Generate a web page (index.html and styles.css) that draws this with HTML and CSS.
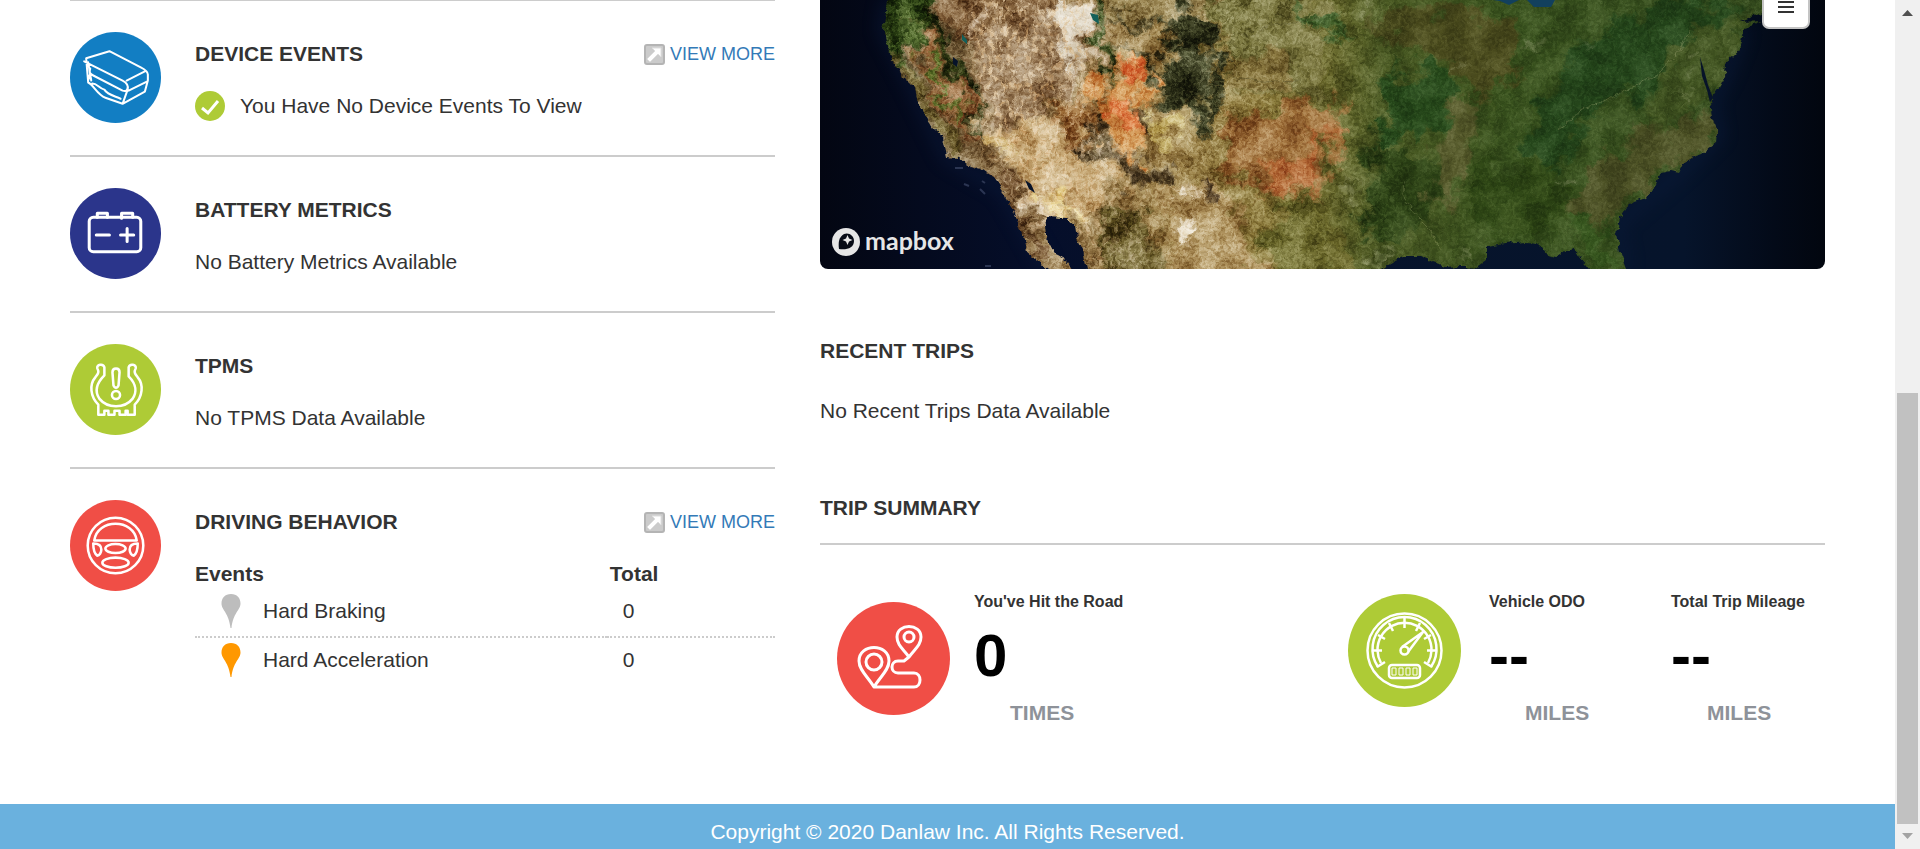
FILE: index.html
```html
<!DOCTYPE html>
<html lang="en">
<head>
<meta charset="utf-8">
<title>Vehicle Dashboard</title>
<link rel="stylesheet" href="styles.css">
</head>
<body>
<svg class="defs" aria-hidden="true">
  <symbol id="arrow-box" viewBox="0 0 21 21">
    <rect x="1" y="1" width="19" height="19" rx="2" fill="#cbcbcb" stroke="#b4b4b4" stroke-width="2"/>
    <path d="M8 4h9v9l-3-3-8 8-3-3 8-8z" fill="#fff" stroke="#dedede"/>
  </symbol>
  <symbol id="pin" viewBox="0 0 20 34">
    <path d="M10 0C4 0 .5 4 .5 9.500C.5 16 8 19 9.500 34h1C12 19 19.500 16 19.500 9.500 19.500 4 16 0 10 0z" fill="currentColor"/>
  </symbol>
</svg>
<div class="page">
  <div class="content">
    <main class="columns">
      <div class="panels">
        <section class="panel">
          <svg class="badge" viewBox="0 0 90 90" fill="none" stroke="#fff" stroke-width="2" stroke-linejoin="round" stroke-linecap="round">
            <circle cx="45" cy="45" r="45" fill="#127ec3" stroke="none"/>
            <path d="M16 26 39 19 70 35c4 2 7 4 7 7v6l-3 11-22 12-17-6c-8-3-12-13-17-15zM14 29l38 19c4 2 6 5 5 9l-5 14M20 36c-1 4-1 5 3 7l29 15c3 1 5 0 5-3M20 41l-2 7M56 48l18-9M58 58l18-9M18 30l3 18M22 51c5 0 6 4 12 6 3 5 9 6 16 9"/>
          </svg>
          <div class="panel-body">
            <div class="panel-head"><h2>DEVICE EVENTS</h2>
              <a class="more" href="#device-events"><svg viewBox="0 0 21 21"><use href="#arrow-box"/></svg>VIEW MORE</a></div>
            <p class="ok"><svg viewBox="0 0 30 30"><circle cx="15" cy="15" r="15" fill="#aecb36"/><path d="m7 17 6 5 10-12" fill="none" stroke="#fff" stroke-width="3"/></svg>You Have No Device Events To View</p>
          </div>
        </section>
        <section class="panel">
          <svg class="badge" viewBox="0 0 90 90" fill="none" stroke="#fff" stroke-width="3" stroke-linejoin="round">
            <circle cx="45" cy="45" r="45" fill="#2b358b" stroke="none"/>
            <rect x="19" y="29" width="51" height="34" rx="4"/>
            <path d="M27 29v-4h10v4M51 30v-5h11v4M26 46.500h13M50 46.500h13M56.500 40v13" stroke-linecap="round"/>
          </svg>
          <div class="panel-body">
            <div class="panel-head"><h2>BATTERY METRICS</h2></div>
            <p>No Battery Metrics Available</p>
          </div>
        </section>
        <section class="panel">
          <svg class="badge" viewBox="0 0 90 90" fill="none" stroke="#fff" stroke-width="2.500" stroke-linejoin="round">
            <circle cx="45" cy="45" r="45" fill="#aecb36" stroke="none"/>
            <path d="M28 70V60C20 52 19 40 25 33c3-4 4-5 2-9-1-4 6-5 7-1v8C25 40 25 48 29 54c8 10 25 10 33 0 4-6 4-14-4-22v-9c1-4 8-3 7 1-2 4-1 5 2 9 6 7 5 19-3 27v10h-7v-4h-2v4h-6v-4h-5v4h-6v-4h-4v4z"/>
            <path d="M42 28c0-5 7-5 7 0l-1 13c-1 3-4 3-5 0z"/><circle cx="45.500" cy="50.500" r="4"/>
          </svg>
          <div class="panel-body">
            <div class="panel-head"><h2>TPMS</h2></div>
            <p>No TPMS Data Available</p>
          </div>
        </section>
        <section class="panel">
          <svg class="badge" viewBox="0 0 90 90" fill="none" stroke="#fff" stroke-width="2.500" stroke-linejoin="round">
            <circle cx="45" cy="45" r="45" fill="#f04e46" stroke="none"/>
            <circle cx="45" cy="45" r="27.500"/>
            <path d="M24 40c3-22 39-22 42 0zM23 43c7 0 8 3 8 6s-2 6-4 6c-3-2-4-7-4-12zM67 43c-7 0-8 3-8 6s2 6 4 6c3-2 4-7 4-12z"/>
            <ellipse cx="45" cy="48" rx="10" ry="4.500"/><ellipse cx="45" cy="62" rx="13" ry="5"/>
          </svg>
          <div class="panel-body">
            <div class="panel-head"><h2>DRIVING BEHAVIOR</h2>
              <a class="more" href="#driving-behavior"><svg viewBox="0 0 21 21"><use href="#arrow-box"/></svg>VIEW MORE</a></div>
            <table class="events">
              <thead><tr><th class="event-name">Events</th><th>Total</th></tr></thead>
              <tbody>
                <tr><td><span class="event"><svg class="pin braking" viewBox="0 0 20 34"><use href="#pin"/></svg>Hard Braking</span></td><td class="count">0</td></tr>
                <tr><td><span class="event"><svg class="pin accel" viewBox="0 0 20 34"><use href="#pin"/></svg>Hard Acceleration</span></td><td class="count">0</td></tr>
              </tbody>
            </table>
          </div>
        </section>
      </div>
      <div class="trips">
        <div class="map">
          <svg class="terrain" viewBox="0 0 1005 269" preserveAspectRatio="xMidYMid slice" role="img" aria-label="Satellite map" color-interpolation-filters="sRGB">
            <defs>
              <linearGradient id="sea" x1="0" x2="1" y1="0" y2="0">
                <stop offset="0" stop-color="#030612"/><stop offset=".1" stop-color="#040a1e"/><stop offset=".22" stop-color="#050e2a"/><stop offset=".5" stop-color="#07142c"/><stop offset=".86" stop-color="#06142b"/><stop offset=".95" stop-color="#030a18"/><stop offset="1" stop-color="#02060f"/>
              </linearGradient>
              <linearGradient id="ground" x1="0" x2="1" y1="0" y2="0">
                <stop offset=".06" stop-color="#5d4d2b"/><stop offset=".18" stop-color="#96794f"/><stop offset=".35" stop-color="#a1864d"/><stop offset=".44" stop-color="#8b7939"/><stop offset=".5" stop-color="#6c6a2c"/><stop offset=".56" stop-color="#4b5a23"/><stop offset=".68" stop-color="#38511d"/><stop offset="1" stop-color="#33491d"/>
              </linearGradient>
              <clipPath id="land">
                <path d="M70-15 68 0 63 30 72 60 82 76 93 87 97 101 105 115 113 128 123 137 127 157 138 158 150 166 163 170 174 178 183 190 187 201 193 210 197 223 203 237 206 251 213 257 228 269 235 290 256 290 250 269 247 262 237 256 232 247 228 243 225 217 247 218 255 225 257 237 263 250 267 269 267 290 550 290 561 269 573 262 584 257 600 257 626 267 640 266 655 269 666 261 666 247 685 244 707 242 716 243 722 247 728 256 736 258 745 251 754 249 760 258 769 269 770 290 812 290 806 269 800 253 797 233 800 217 806 208 814 202 826 198 833 190 838 180 841 173 850 171 858 173 863 163 881 155 887 150 897 143 898 133 892 117 890 102 898 91 905 77 906 63 915 55 919 50 923 33 925 27 942 21 920 22 942 13 965 7 990 2 990-15z"/>
              </clipPath>
              <filter id="soft" x="-10%" y="-10%" width="120%" height="120%">
                <feGaussianBlur stdDeviation="2.500" result="b"/>
                <feTurbulence type="fractalNoise" baseFrequency=".043" numOctaves="6" seed="5" result="n"/>
                <feDisplacementMap in="b" in2="n" scale="55" xChannelSelector="R" yChannelSelector="G"/>
              </filter>
              <filter id="ragged" x="-5%" y="-10%" width="110%" height="120%">
                <feTurbulence type="fractalNoise" baseFrequency=".13" numOctaves="3" seed="2" result="n"/>
                <feDisplacementMap in="SourceGraphic" in2="n" scale="7" xChannelSelector="R" yChannelSelector="G"/>
              </filter>
              <filter id="grain" x="0" y="0" width="100%" height="100%">
                <feTurbulence type="fractalNoise" baseFrequency=".037" numOctaves="7" seed="31"/>
                <feColorMatrix values="2.600 0 0 0 -.8  2.600 0 0 0 -.8  2.600 0 0 0 -.8  0 0 0 0 1"/>
              </filter>
              <filter id="speckle" x="0" y="0" width="100%" height="100%">
                <feTurbulence type="fractalNoise" baseFrequency=".31" numOctaves="3" seed="14"/>
                <feColorMatrix values="2.200 0 0 0 -.6  2.200 0 0 0 -.6  2.200 0 0 0 -.6  0 0 0 0 1"/>
              </filter>
              <filter id="ridges" x="0" y="0" width="100%" height="100%">
                <feTurbulence type="fractalNoise" baseFrequency=".23 .11" numOctaves="4" seed="8"/>
                <feColorMatrix values="0 0 0 0 .9  0 0 0 0 .79  0 0 0 0 .62  5 0 0 0 -2.400"/>
              </filter>
              <filter id="glow" x="-10%" y="-10%" width="120%" height="120%"><feGaussianBlur stdDeviation="8"/></filter>
              <linearGradient id="fade" x1="0" x2="1"><stop offset=".1" stop-color="#fff"/><stop offset=".4" stop-color="#bbb"/><stop offset=".7" stop-color="#333"/><stop offset="1" stop-color="#000"/></linearGradient>
              <linearGradient id="rough" x1="0" x2="1"><stop offset=".4" stop-color="#fff"/><stop offset=".6" stop-color="#555"/></linearGradient>
              <mask id="west"><path d="M145 10 175-15 280-15 290 80 270 110 360 190 410 290 245 290 235 210 215 200 165 150z" fill="url(#fade)" filter="url(#glow)"/></mask>
              <mask id="rugged"><rect y="-15" width="1005" height="300" fill="url(#rough)"/></mask>
            </defs>
            <rect width="1005" height="269" fill="url(#sea)"/>
            <path d="M68 0 63 30 93 87 127 157 183 190 228 269M923 30 905 77 890 102 898 135 858 173 797 225 806 269" fill="none" stroke="#0c1c3c" stroke-width="10" opacity=".6" filter="url(#glow)"/>
            <g filter="url(#ragged)"><g clip-path="url(#land)">
              <rect y="-15" width="1005" height="300" fill="url(#ground)"/>
              <g filter="url(#soft)">
                <path d="M45-30h65v30l15 30 25 50 17 55-10 6-38-75-17-38-15-5 8 60-15-5-35-45z" fill="#29330f"/>
                <path d="M60-30h48v30l-8 26-12 40-30-15z" fill="#2b4113"/>
                <path d="M92 28 110 25 125 60 152 105 160 142 145 142 112 92z" fill="#98663a"/>
                <path d="m102 46 12 3 15 40 18 35-5 3-22-38z" fill="#587126"/>
                <path d="M85 60 105 90 145 150 135 165 90 105 70 70z" fill="#6a5a28"/>
                <path d="M123-30h125v30l-5 20-90 20-30-20z" fill="#84613a"/>
                <path d="M150 35 235 12 272 15 270 80 245 85 205 135 165 105z" fill="#997a55"/>
                <path d="M242 8l22-3 4 36-14 28-12-25z" fill="#e4dccc"/>
                <path d="M262 48l10 5-10 35-12-5z" fill="#cbb99c"/>
                <path d="M150 18 165 5 168 14 148 27z" fill="#dccab2"/>
                <path d="M272-20h18l-2 100-11-15z" fill="#35471a"/>
                <path d="M291-25h105v35L345 30 290 18z" fill="#a08c58"/>
                <path d="M290 20 345 22 330 28 300 26zM285 42l45 13 15 18-35-10z" fill="#4b4424"/>
                <path d="M345 22 370 3 390 20 396 75 405 105 388 138 375 115 360 105 330 90 345 65z" fill="#34371c"/>
                <path d="M375 85l10-2 6 18-6 12z" fill="#8c8250"/>
                <path d="M288 70 318 55 336 85 322 108 325 150 310 165 285 130 270 95z" fill="#ce8e48"/>
                <path d="M295 68 314 64 332 80 316 90zM282 93l40 20-5 12-30-10z" fill="#df8248"/>
                <path d="M292 50 306 50 312 62 295 70z" fill="#c4ab78"/>
                <path d="M327 105 357 118 370 135 350 142 330 130z" fill="#cdbb78"/>
                <path d="M318 108l8 6 3 18-8-4zM272 108l10 5 8 30-14-8z" fill="#4b3a1c"/>
                <path d="M240 95 268 98 282 140 265 150 235 120z" fill="#986630"/>
                <path d="M265 130 290 145 320 168 348 165 350 190 310 180 262 148z" fill="#4d3b20"/>
                <path d="M160 130 230 120 300 180 265 215 220 215 190 165z" fill="#c7a976"/>
                <path d="M165 140l30-5 5 12-25 10z" fill="#cdb070"/>
                <path d="M227 200 252 202 262 230 250 218 225 217z" fill="#e8d496"/>
                <path d="M200 175 212 188 228 235 218 225z" fill="#e5d3b8"/>
                <path d="M172 166 200 178 212 240 230 275 212 265 185 200z" fill="#75532f"/>
                <path d="M285 215 325 205 345 290 285 290z" fill="#665724"/>
                <path d="M345 190 390 175 420 210 440 290 355 290z" fill="#b1955f"/>
                <path d="M365 188l6 0 3 8-8 2zM358 217l15 2 6 16-11 3z" fill="#efe6d4"/>
                <path d="M378 173l10 3-1 18-8 0z" fill="#513d27"/>
                <path d="M392-30h110v125h-90l-15-55z" fill="#77733a"/>
                <path d="M405 60 470 58 480 90 410 92z" fill="#8b7940"/>
                <path d="M400 130 515 95 512 165 480 200 415 185z" fill="#a0713a"/>
                <path d="M430 165 505 140 495 180 465 195zM482 132l30-3-8 14z" fill="#b36935"/>
                <path d="M440 225 500 190 530 290 450 290z" fill="#696628"/>
                <path d="M470 8 510 5 520 35 490 30z" fill="#3c5a25"/>
                <path d="M575 75 630 65 645 100 620 125 560 145 565 110z" fill="#26481a"/>
                <path d="M550 145 610 155 615 205 580 245 545 235z" fill="#2d4316"/>
                <path d="M540 30 600 5 690 20 700 80 660 90 620 60z" fill="#4a4b1d"/>
                <path d="M640 95 665 100 640 170 620 220 610 180z" fill="#55592a"/>
                <path d="M760 40 850 0 910 0 840 80 770 115 740 165 700 150z" fill="#24451a"/>
                <path d="M865 35 930 15 915 85 865 110 820 140 840 90z" fill="#415421"/>
                <path d="M800 140 890 110 905 145 840 175 790 220 745 210z" fill="#4b5024"/>
                <path d="M650 170 735 160 750 225 690 240 650 210z" fill="#2e4615"/>
                <path d="M750 215 790 225 798 290 770 270z" fill="#35541d"/>
              </g>
              <g fill="none" stroke="#a0a66e" opacity=".35">
                <path d="M584 180 583 196 590 205 598 218 612 232 620 250M738 130 751 120 760 110 778 104 795 95 815 87 840 72 856 55 870 30"/>
                <path d="M405 78 422 78 440 82 455 81 480 80M420 35 436 35 450 25 475 23 500 18" stroke="#403d1d"/>
              </g>
              <g fill="#c1c397" opacity=".4" filter="url(#soft)">
                <circle cx="530" cy="192" r="7"/><circle cx="557" cy="255" r="6"/><circle cx="714" cy="46" r="5"/><circle cx="640" cy="69" r="4"/><circle cx="745" cy="177" r="5"/><circle cx="879" cy="56" r="4"/><circle cx="769" cy="42" r="4"/><circle cx="864" cy="97" r="4"/><circle cx="546" cy="14" r="4"/><circle cx="647" cy="251" r="4"/>
              </g>
              <rect y="-15" width="1005" height="300" filter="url(#ridges)" mask="url(#west)" opacity=".75"/>
              <g class="grain" mask="url(#rugged)"><rect y="-15" width="1005" height="300" filter="url(#grain)"/></g>
              <g class="speckle" mask="url(#rugged)"><rect y="-15" width="1005" height="300" filter="url(#speckle)"/></g>
            </g></g>
            <path d="M270 13l8 2 1 9-6-4zM142 34l5 6v4l-5-4z" fill="#13605a"/>
            <path d="M656 0 663 1 672 5 682 0zM690 0 697 7 714 7 718 0z" transform="translate(17)" fill="#12405d"/>
            <path d="M880 57 882 76 887 90 890 102 893 98 888 85 884 70zM205 180l6 4 4 9-6-4zM133 57l5 4-1 6-4-3z" fill="#071329"/>
            <path d="M135 168h8M144 184l5 2M162 181l3 2M160 189l5 5M165 266h6" stroke="#2b3552" stroke-width="2"/>
          </svg>
          <div class="mapbox">
            <svg viewBox="0 0 28 28"><circle cx="14" cy="14" r="14" fill="#e6e6e6"/><path d="M7 21c-1-7 0-12 5-15 5-2 10 2 10 7 0 7-7 9-15 8z" fill="#070b16"/><path d="m15.500 7 1.500 3.500 3.500 1.500-3.500 1.500-1.500 3.500-1.500-3.500-3.500-1.500 3.500-1.500z" fill="#e6e6e6"/></svg>
            <span>mapbox</span>
          </div>
          <button class="layers" type="button" aria-label="Map layers"><svg viewBox="0 0 16 18"><path d="M0 2h16M0 7h16M0 12h16M0 17h16" stroke="#333" stroke-width="2"/></svg></button>
        </div>
        <h2 class="recent-title">RECENT TRIPS</h2>
        <p class="recent-text">No Recent Trips Data Available</p>
        <h2 class="summary-title">TRIP SUMMARY</h2>
        <div class="stats">
          <div class="stat-group">
            <svg class="stat-badge lowered" viewBox="0 0 113 113" fill="none" stroke="#fff" stroke-width="3" stroke-linejoin="round">
              <circle cx="56.500" cy="56.500" r="56.500" fill="#f04e46" stroke="none"/>
              <path d="M37 85C31 75 22 68 22 59c0-18 30-18 30 0 0 9-9 16-15 26h40c8 0 8-14 0-14H61c-8 0-8-12 0-12h6l5-4C66 47 60 43 60 35c0-14 24-14 24 0 0 8-6 12-12 20"/>
              <circle cx="37" cy="60" r="8"/><circle cx="72" cy="35" r="5"/>
            </svg>
            <div class="metric"><h3>You've Hit the Road</h3><strong>0</strong><span>TIMES</span></div>
          </div>
          <div class="stat-group odometer">
            <svg class="stat-badge" viewBox="0 0 113 113" fill="none" stroke="#fff" stroke-width="2.500" stroke-linejoin="round">
              <circle cx="56.500" cy="56.500" r="56.500" fill="#aecb36" stroke="none"/>
              <circle cx="56.500" cy="56.500" r="37"/>
              <path d="M30 73A32 32 0 1 1 83 73M33 69A27 27 0 1 1 80 69" />
              <path d="M29 73 37 68M84 73 76 68M25 56.500h9M79 56.500h9M30 41l7 4M83 41l-7 4M41 29l4 8M72 29l-4 8M56.500 24v10"/>
              <path d="M54 53 75 38 60 58"/><circle cx="56.500" cy="56.500" r="4" fill="#aecb36"/>
              <rect x="41" y="71" width="31" height="13" rx="3"/>
              <path d="M44 74h4v7h-4zM51 74h4v7h-4zM58 74h4v7h-4zM65 74h4v7h-4z" stroke-width="1"/>
            </svg>
            <div class="metric"><h3>Vehicle ODO</h3><strong>--</strong><span>MILES</span></div>
            <div class="metric"><h3>Total Trip Mileage</h3><strong>--</strong><span>MILES</span></div>
          </div>
        </div>
      </div>
    </main>
    <footer>Copyright © 2020 Danlaw Inc. All Rights Reserved.</footer>
  </div>
  <div class="scrollbar" aria-hidden="true">
    <svg viewBox="0 0 11 6"><path d="M0 6 5.500 0 11 6z" fill="#505050"/></svg>
    <div class="track"><div class="thumb"></div></div>
    <svg viewBox="0 0 11 6"><path d="M0 0h11L5.500 6z" fill="#a3a3a3"/></svg>
  </div>
</div>
</body>
</html>
```

FILE: styles.css
```css
* { box-sizing: border-box; }

body {
  margin: 0;
  background: #fff;
  color: #333;
  font: 21px/30px "Liberation Sans", Arial, sans-serif;
}

h2, h3, p { margin: 0; }
h2 { font-size: 21px; line-height: 30px; }
svg { display: block; flex: none; }
.defs { position: absolute; width: 0; height: 0; }

.page { display: flex; min-height: 100vh; }
.content { flex: 1; display: flex; flex-direction: column; }
.columns {
  flex: 1;
  display: grid;
  grid-template-columns: 705fr 1005fr;
  gap: 45px;
  padding: 0 70px;
}

/* Left column */
.panels { border-top: 1px solid #ccc; }
.panel {
  display: flex;
  gap: 35px;
  padding: 31px 0;
  min-height: 156px;
  border-bottom: 2px solid #ccc;
}
.panel:last-child { border-bottom: 0; }
.badge { width: 91px; height: 91px; }
.panel-body { flex: 1; padding-top: 7px; }
.panel-head { display: flex; justify-content: space-between; margin-bottom: 22px; }
.more {
  display: flex;
  align-items: center;
  gap: 5px;
  color: #337ab7;
  font-size: 18px;
  text-decoration: none;
}
.more svg { width: 21px; height: 21px; }
.panel { gap: 34px; }
.ok { display: flex; gap: 15px; }
.ok svg { width: 30px; height: 30px; }

.events { width: 100%; border-collapse: collapse; table-layout: fixed; }
.events th, .events td { padding: 0; text-align: left; }
.events .event-name { width: 71%; }
.events th:last-child { padding-left: 3px; }
.events td { height: 48px; padding-bottom: 3px; }
.events tbody tr:first-child td { border-bottom: 2px dotted #ccc; }
.events .count { padding-left: 16px; }
.event { display: flex; align-items: center; gap: 22px; padding-left: 26px; }
.pin { width: 20px; height: 34px; }
.braking { color: #bdbdbd; }
.accel { color: #ff9800; }

/* Right column */
.map {
  position: relative;
  height: 269px;
  overflow: hidden;
  border-radius: 0 0 8px 8px;
}
.terrain { width: 100%; height: 100%; }
.grain { mix-blend-mode: soft-light; opacity: 0.7; }
.speckle { mix-blend-mode: soft-light; opacity: 0.5; }
.mapbox {
  position: absolute;
  left: 12px;
  bottom: 13px;
  display: flex;
  align-items: flex-end;
  gap: 5px;
  color: #e6e6e6;
  font: 700 25px/28px Lato, sans-serif;
}
.mapbox svg { width: 28px; height: 28px; }
.mapbox span { padding-bottom: 2px; }
.layers {
  position: absolute;
  top: -17px;
  right: 15px;
  width: 48px;
  height: 46px;
  padding: 0 14px 4px;
  border: 2px solid #c4c4c4;
  border-radius: 7px;
  background: #fff;
}
.layers svg { width: 16px; height: 18px; }
.recent-title { margin-top: 67px; }
.recent-text { margin-top: 30px; }
.summary-title {
  margin-top: 67px;
  padding-bottom: 20px;
  border-bottom: 2px solid #ccc;
}
.stats {
  display: grid;
  grid-template-columns: 532fr 473fr;
  padding-top: 45px;
}
.stat-group { display: flex; align-items: flex-start; gap: 24px; padding-left: 17px; }
.odometer { gap: 28px; padding: 0; }
.stat-badge { width: 113px; height: 113px; margin-top: 4px; }
.lowered { margin-top: 12px; }
.odometer .metric { flex: 0 0 154px; }
.metric h3 { font-size: 16px; line-height: 24px; }
.metric strong { display: block; color: #000; font-size: 60px; line-height: 84px; }
.metric span {
  display: block;
  padding-left: 36px;
  color: #8e9299;
  font-weight: bold;
}

footer {
  padding: 13px 0 2px;
  background: #6ab1de;
  color: #fff;
  text-align: center;
}

.scrollbar {
  width: 25px;
  display: flex;
  flex-direction: column;
  align-items: center;
  padding: 10px 2px;
  background: #f0f0f0;
}
.scrollbar svg { width: 11px; height: 6px; }
.track { flex: 1; width: 100%; display: flex; align-items: flex-end; padding: 9px 0; }
.thumb { width: 100%; height: 54%; background: #c1c1c1; }
```
